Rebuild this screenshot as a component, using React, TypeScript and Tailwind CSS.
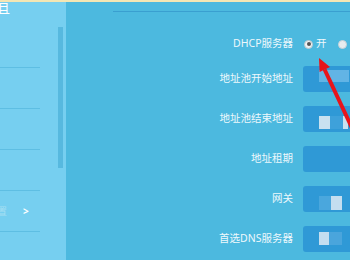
import React from 'react';

type Tile = { w: string; color: string };

type FieldProps = {
  label: string;
  tiles?: Tile[];
  tileClass?: string;
};

const Field = ({ label, tiles = [], tileClass = '' }: FieldProps) => (
  <div className="flex h-[26px] items-center">
    <span className="w-[227px] text-right">{label}</span>
    <div className="ml-[10px] flex h-full flex-1 rounded-l-[3px] bg-[#2f99d6] pl-[16px]">
      <div className={`flex ${tileClass}`}>
        {tiles.map((t, i) => (
          <div key={i} className={`${t.w} ${t.color} h-full`} />
        ))}
      </div>
    </div>
  </div>
);

export default function App() {
  return (
    <div className="relative h-[260px] w-[350px] overflow-hidden font-['Noto_Sans','Noto_Sans_CJK_SC',sans-serif] text-[10.5px] text-[#eef8fc]">
      <div className="h-[2px] bg-[#f3e6b4]" />
      <div className="flex h-[258px]">
        {/* side menu */}
        <aside className="flex w-[66px] bg-[#76cff0]">
          <div className="w-[58px]">
            <div className="h-[25px] overflow-hidden">
              <span className="-ml-[3px] block text-[13px] leading-[13px] text-white">且</span>
            </div>
            {[0, 1, 2, 3, 4].map((i) => (
              <div key={i} className="flex h-[41px] w-[40px] items-center border-b border-[#5ebee3]">
                {i === 4 && (
                  <>
                    <span className="-ml-[3px] text-[10px] text-[#a5dff3]">置</span>
                    <span className="ml-[16px] text-[10px] font-bold text-white">&gt;</span>
                  </>
                )}
              </div>
            ))}
          </div>
          <div className="mt-[25px] h-[141px] w-[5px] bg-[#57b9df]" />
        </aside>

        {/* content */}
        <main className="flex-1 bg-[#4cb9df]">
          <div className="ml-[47px] mt-[9px] h-px bg-[#3a9fd0]" />
          <div className="mt-[19px] flex h-[26px] items-center">
            <span className="w-[227px] text-right">DHCP服务器</span>
            <div className="ml-[11px] flex items-center">
              <span className="flex h-[9px] w-[9px] items-center justify-center rounded-full border border-[#b9c6cc] bg-[#eef2f4]">
                <span className="h-[4px] w-[4px] rounded-full bg-[#555]" />
              </span>
              <span className="ml-[3px]">开</span>
              <span className="ml-[11px] h-[9px] w-[9px] rounded-full border border-[#c9d3d8] bg-[#e6ecef]" />
            </div>
          </div>
          <div className="mt-[9px] flex flex-col gap-[14px]">
            <Field
              label="地址池开始地址"
              tileClass="flex-1 pt-[4px] pb-[10px]"
              tiles={[{ w: 'w-[30px]', color: 'bg-[#62b4e5]' }]}
            />
            <Field
              label="地址池结束地址"
              tileClass="pt-[10px] pb-[3px]"
              tiles={[
                { w: 'w-[11px]', color: 'bg-[#c8e1f0]' },
                { w: 'w-[13px]', color: 'bg-[#3ea1da]' },
                { w: 'w-[5px]', color: 'bg-[#c8e1f0]' },
              ]}
            />
            <Field label="地址租期" />
            <Field
              label="网关"
              tileClass="pt-[10px] pb-[2px]"
              tiles={[
                { w: 'w-[12px]', color: 'bg-[#4aa7dd]' },
                { w: 'w-[11px]', color: 'bg-[#c4def0]' },
              ]}
            />
            <Field
              label="首选DNS服务器"
              tileClass="pt-[6px] pb-[7px]"
              tiles={[
                { w: 'w-[10px]', color: 'bg-[#c4def0]' },
                { w: 'w-[13px]', color: 'bg-[#4aa5dc]' },
              ]}
            />
          </div>
        </main>
      </div>

      {/* red annotation arrow */}
      <svg className="absolute left-[300px] top-[50px]" width="50" height="90" viewBox="0 0 50 90">
        <line x1="24.6" y1="19.5" x2="53" y2="80" stroke="#e8141b" strokeWidth="4" />
        <polygon points="19,8 19.6,22 30,17" fill="#e8141b" />
      </svg>
    </div>
  );
}
